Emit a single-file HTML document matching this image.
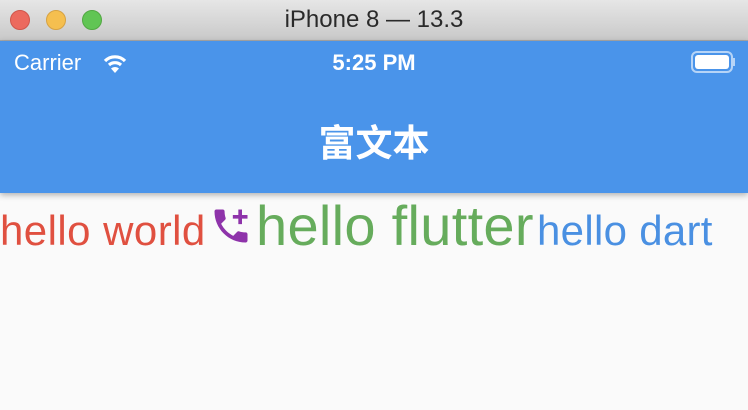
<!DOCTYPE html>
<html><head><meta charset="utf-8"><style>
body{margin:0;width:748px;height:410px;overflow:hidden;background:#fafafa;font-family:"Liberation Sans","Noto Sans CJK SC",sans-serif;position:relative}
.tb{position:absolute;left:0;top:0;width:748px;height:41px;background:linear-gradient(#e6e6e6,#c9c9c9);border-bottom:1px solid #a9a9a9;box-sizing:border-box}
.dot{position:absolute;top:10px;width:20px;height:20px;border-radius:50%;box-sizing:border-box}
.tt{position:absolute;left:0;width:748px;top:6px;text-align:center;font-size:24px;color:#2a2a2a}
.bar{position:absolute;left:0;top:41px;width:748px;height:152px;background:#4a94ea;box-shadow:0 2px 6px rgba(0,0,0,.3)}
.w{position:absolute;color:#fff}
.t{position:absolute;top:201px;font-size:42px;white-space:nowrap;line-height:60px}
</style></head><body>
<div class="tb">
<div class="dot" style="left:10px;background:#ec6a5e;border:1px solid #d0564b"></div>
<div class="dot" style="left:46px;background:#f5bf4f;border:1px solid #d6a243"></div>
<div class="dot" style="left:82px;background:#61c554;border:1px solid #52a842"></div>
<div class="tt">iPhone 8 — 13.3</div>
</div>
<div class="bar">
<div class="w" style="left:14px;top:9px;font-size:22px">Carrier</div>
<svg class="w" style="left:100px;top:11px" width="30" height="22" viewBox="0 0 30 22"><path d="M15 21 L11 16.5 A6 6 0 0 1 19 16.5Z" fill="#fff"/><path d="M5 9 A14 14 0 0 1 25 9" stroke="#fff" stroke-width="3.2" fill="none"/><path d="M9 13 A9 9 0 0 1 21 13" stroke="#fff" stroke-width="3.2" fill="none"/></svg>
<div class="w" style="left:0;width:748px;text-align:center;top:9px;font-size:22px;font-weight:bold">5:25 PM</div>
<div class="w" style="left:691px;top:10px;width:42px;height:22px;border:2px solid rgba(255,255,255,.6);border-radius:6px;box-sizing:border-box"></div>
<div class="w" style="left:695px;top:14px;width:34px;height:14px;background:#fff;border-radius:3px"></div>
<div class="w" style="left:733px;top:17px;width:2px;height:8px;background:rgba(255,255,255,.6)"></div>
<div class="w" style="left:0;width:748px;text-align:center;top:72px;font-size:37px;font-weight:bold">富文本</div>
</div>
<div class="t" style="left:0;color:#e05040;letter-spacing:0.45px">hello world</div>
<svg style="position:absolute;left:209px;top:204px" width="44" height="44" viewBox="0 0 24 24"><path fill="#8e33aa" d="M20 15.5c-1.25 0-2.45-.2-3.57-.57-.35-.11-.74-.03-1.02.24l-2.2 2.2c-2.83-1.44-5.15-3.75-6.59-6.59l2.2-2.21c.28-.26.36-.65.25-1C8.7 6.45 8.5 5.25 8.5 4c0-.55-.45-1-1-1H4c-.55 0-1 .45-1 1 0 9.39 7.61 17 17 17 .55 0 1-.45 1-1v-3.5c0-.55-.45-1-1-1zM21 6h-3V3h-2v3h-3v2h3v3h2V8h3z"/></svg>
<div class="t" style="left:256px;font-size:56px;top:196px;color:#66ac5c;letter-spacing:0.3px">hello flutter</div>
<div class="t" style="left:537px;color:#4a90e2;letter-spacing:0.3px">hello dart</div>
</body></html>
